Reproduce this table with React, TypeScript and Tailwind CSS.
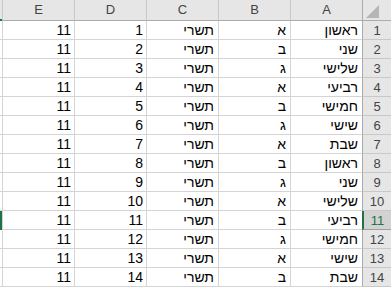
const days = ["ראשון", "שני", "שלישי", "רביעי", "חמישי", "שישי", "שבת"];
const letters = ["א", "ב", "ג"];

const rows = Array.from({ length: 14 }, (_, i) => ({
  n: i + 1,
  a: days[i % 7],
  b: letters[i % 3],
  c: "תשרי",
  d: String(i + 1),
  e: "11",
}));

const cols = "grid grid-cols-[29px_72px_72px_72px_72px_72px_2px]";

export default function App() {
  return (
    <div
      dir="rtl"
      className="w-[391px] h-[288px] overflow-hidden bg-white text-[#000] font-['Liberation_Sans',Arial,sans-serif]"
    >
      {/* Column headers */}
      <div className={`${cols} h-[21px] bg-[#e6e6e6] text-[13px] text-[#444]`}>
        <div className="relative border-l border-b border-[#ababab]">
          <svg className="absolute left-[3px] top-[5px]" width="13" height="13" viewBox="0 0 13 13">
            <polygon points="13,0 13,13 0,13" fill="#b5b5b5" />
          </svg>
        </div>
        {["A", "B", "C", "D", "E"].map((c) => (
          <div
            key={c}
            className="flex items-center justify-center border-l border-l-[#c8c8c8] border-b border-b-[#ababab]"
          >
            {c}
          </div>
        ))}
        <div className="border-b-2 border-[#217346]" />
      </div>

      {/* Rows */}
      {rows.map((r) => {
        const sel = r.n === 11;
        return (
          <div key={r.n} className={`${cols} h-[19px] text-[14px] leading-none`}>
            <div
              className={`flex items-center justify-center text-[13px] border-b ${
                sel
                  ? "bg-[#d2d2d2] text-[#217346] border-l-2 border-l-[#217346] border-b-[#9e9e9e]"
                  : "bg-[#e6e6e6] text-[#444] border-l border-l-[#ababab] border-b-[#c8c8c8]"
              }`}
            >
              {r.n}
            </div>
            <div className="flex items-center justify-start pr-[4px] border-l border-b border-[#d4d4d4]">
              {r.a}
            </div>
            <div className="flex items-center justify-start pr-[4px] border-l border-b border-[#d4d4d4]">
              {r.b}
            </div>
            <div className="flex items-center justify-start pr-[4px] border-l border-b border-[#d4d4d4]">
              {r.c}
            </div>
            <div dir="ltr" className="flex items-center justify-end pr-[3px] border-l border-b border-[#d4d4d4]">
              {r.d}
            </div>
            <div dir="ltr" className="flex items-center justify-end pr-[3px] border-l border-b border-[#d4d4d4]">
              {r.e}
            </div>
            <div className={sel ? "bg-[#217346]" : "border-b border-[#d4d4d4]"} />
          </div>
        );
      })}
    </div>
  );
}
